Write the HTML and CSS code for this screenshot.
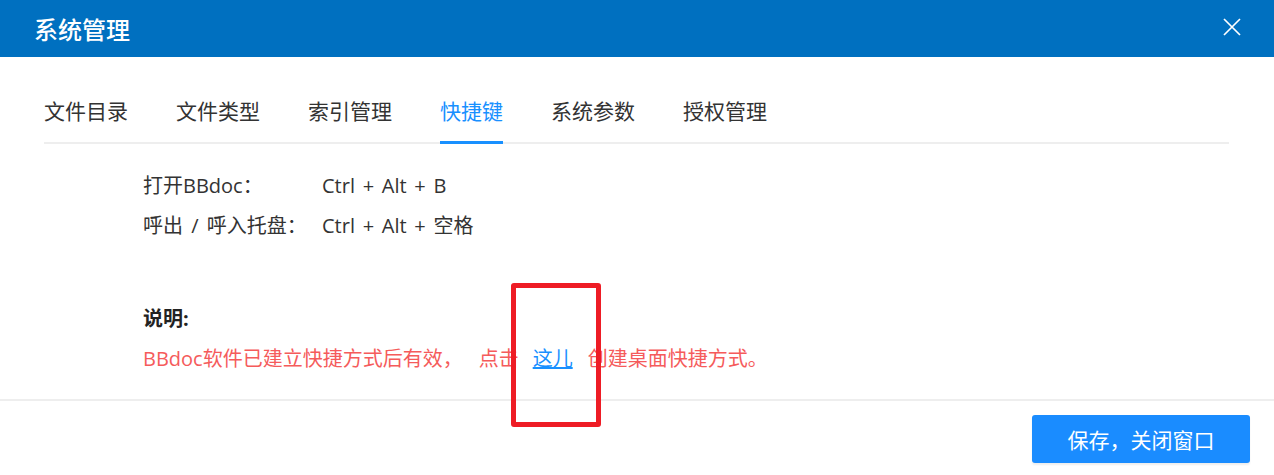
FILE: index.html
```html
<!DOCTYPE html>
<html lang="zh-CN">
<head>
    <meta charset="UTF-8">
    <meta name="viewport" content="width=device-width, initial-scale=1.0">
    <title>系统管理</title>
    <link rel="stylesheet" href="styles.css">
</head>
<body>
    <div class="dialog">
        <div class="dialog-header">
            <span class="dialog-title">系统管理</span>
            <span class="dialog-close">
                <svg width="18" height="18" viewBox="0 0 18 18">
                    <path d="M1 1 L17 17 M17 1 L1 17" stroke="#fff" stroke-width="1.7" fill="none"/>
                </svg>
            </span>
        </div>

        <div class="dialog-body">
            <div class="tabs">
                <div class="tab">文件目录</div>
                <div class="tab">文件类型</div>
                <div class="tab">索引管理</div>
                <div class="tab active">快捷键</div>
                <div class="tab">系统参数</div>
                <div class="tab">授权管理</div>
            </div>

            <div class="tab-content">
                <div class="key-row">
                    <span class="key-label">打开BBdoc：</span>
                    <span class="key-value">Ctrl + Alt + B</span>
                </div>
                <div class="key-row">
                    <span class="key-label">呼出 / 呼入托盘：</span>
                    <span class="key-value">Ctrl + Alt + 空格</span>
                </div>

                <div class="note">
                    <div class="note-title">说明:</div>
                    <div class="note-text">BBdoc软件已建立快捷方式后有效，<span class="note-gap"></span>点击<a href="#" class="note-link">这儿</a>创建桌面快捷方式。</div>
                </div>
            </div>
        </div>

        <div class="dialog-footer">
            <button class="btn-save">保存，关闭窗口</button>
        </div>

        <!-- 截图标注框 -->
        <div class="mark-box"></div>
    </div>
</body>
</html>
```

FILE: styles.css
```css
body {
    margin: 0;
    padding: 0;
    font-family: "Open Sans", "Noto Sans CJK SC", sans-serif;
    color: #333;
    background: #fff;
}
.dialog {
    position: relative;
    width: 1274px;
    height: 475px;
    overflow: hidden;
}
.dialog-header {
    height: 57px;
    background-color: #0070c0;
    display: flex;
    align-items: center;
    justify-content: space-between;
    padding: 0 33px 0 34px;
}
.dialog-title {
    color: #fff;
    font-size: 24px;
    font-weight: 500;
    font-family: "Noto Sans CJK SC", sans-serif;
    line-height: 57px;
}
.dialog-close {
    display: flex;
    margin-top: -4px;
}
.dialog-body {
    padding: 22px 45px 0 44px;
    height: 320px;
}
.tabs {
    display: flex;
    border-bottom: 2px solid #eeeeee;
}
.tab {
    font-size: 21px;
    font-family: "Noto Sans CJK SC", sans-serif;
    height: 62px;
    line-height: 62px;
    margin-right: 48px;
    margin-bottom: -2px;
    border-bottom: 3px solid transparent;
    color: #333;
}
.tab.active {
    color: #1890ff;
    border-bottom-color: #1890ff;
}
.tab-content {
    padding: 22px 0 0 99px;
    font-size: 20px;
}
.key-row {
    display: flex;
    line-height: 40px;
}
.key-label {
    width: 179px;
    word-spacing: 3px;
}
.key-value {
    word-spacing: 2.5px;
}
.note {
    margin-top: 53px;
    line-height: 40px;
}
.note-title {
    font-weight: bold;
    color: #222;
}
.note-text {
    color: #f55b5b;
}
.note-gap {
    display: inline-block;
    width: 16px;
}
.note-link {
    color: #1890ff;
    text-decoration: underline;
    margin: 0 15px 0 14px;
}
.dialog-footer {
    border-top: 2px solid #eeeeee;
    display: flex;
    justify-content: flex-end;
    padding: 14px 24px 0 0;
}
.btn-save {
    width: 218px;
    height: 48px;
    background-color: #1a8cff;
    color: #fff;
    border: none;
    border-radius: 3px;
    font-size: 21px;
    font-family: "Noto Sans CJK SC", sans-serif;
    box-shadow: 0 2px 2px #eeeeee;
    cursor: pointer;
}
.mark-box {
    position: absolute;
    left: 511px;
    top: 283px;
    width: 80px;
    height: 134px;
    border: 5px solid #ee1c25;
    border-radius: 3px;
}
```
